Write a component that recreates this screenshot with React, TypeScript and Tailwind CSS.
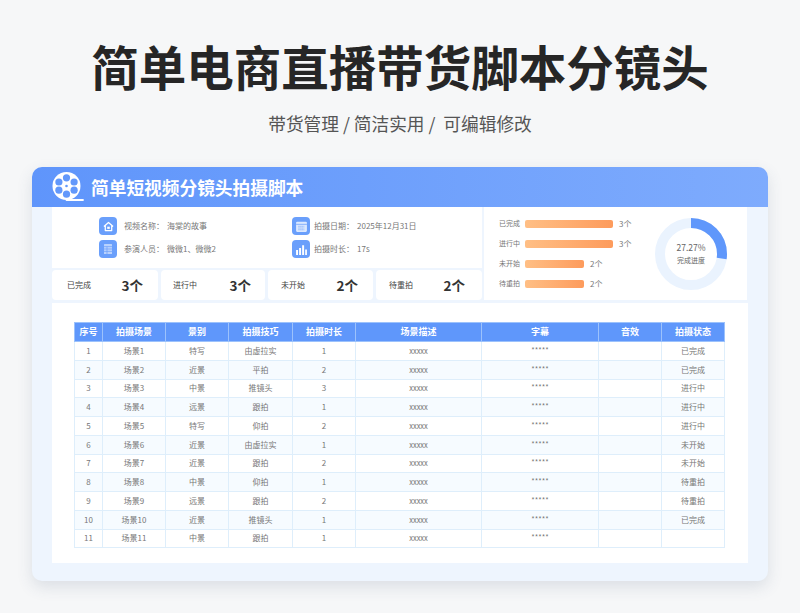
const font = { fontFamily: '"Noto Sans CJK SC", "Noto Sans", sans-serif' };

function HomeIcon() {
  return (
    <svg viewBox="0 0 12 12" className="h-[11px] w-[11px]">
      <path d="M1 6 6 1.6 11 6M2.5 5v5.4h7V5" fill="none" stroke="#fff" strokeWidth="1.4" strokeLinejoin="round" />
      <rect x="4.6" y="6.2" width="2.8" height="2.4" fill="#fff" />
    </svg>
  );
}

function SheetIcon() {
  return (
    <svg viewBox="0 0 12 12" className="h-[12px] w-[12px]">
      <rect x="2" y="1" width="8" height="10" rx="0.6" fill="#b9d2fd" />
      <path d="M2 3.6h8M2 6h8M2 8.4h8M5 3.6V11" stroke="#6a9ffb" strokeWidth="0.7" />
    </svg>
  );
}

function CalendarIcon() {
  return (
    <svg viewBox="0 0 12 12" className="h-[13px] w-[13px]">
      <rect x="1" y="1.6" width="10" height="9.4" rx="1" fill="#dbe8fe" />
      <path d="M1 4h10" stroke="#6a9ffb" strokeWidth="0.7" />
      <path d="M3.2 5.8h5.6M3.2 7.4h5.6M3.2 9h5.6" stroke="#6a9ffb" strokeWidth="0.8" strokeDasharray="1 0.8" />
    </svg>
  );
}

function BarsIcon() {
  return (
    <svg viewBox="0 0 12 12" className="h-[13px] w-[13px]">
      <path d="M1 6.5h1.8V11H1zM3.8 4.5h1.8V11H3.8zM6.6 2h1.8v9H6.6zM9.4 6h1.6v5H9.4z" fill="#fff" />
    </svg>
  );
}

const infoLeft = [
  { label: "视频名称：", value: "海棠的故事", icon: <HomeIcon /> },
  { label: "参演人员：", value: "微微1、微微2", icon: <SheetIcon /> },
];
const infoRight = [
  { label: "拍摄日期：", value: "2025年12月31日", icon: <CalendarIcon /> },
  { label: "拍摄时长：", value: "17s", icon: <BarsIcon /> },
];

const stats = [
  { label: "已完成", value: "3个", cls: "w-[106px] pl-[15px] pr-[15px]" },
  { label: "进行中", value: "3个", cls: "w-[104px] pl-[12px] pr-[14px]" },
  { label: "未开始", value: "2个", cls: "w-[105px] pl-[13px] pr-[15px]" },
  { label: "待重拍", value: "2个", cls: "w-[106px] pl-[13px] pr-[17px]" },
];

const bars = [
  { label: "已完成", value: "3个", w: "w-[88px]" },
  { label: "进行中", value: "3个", w: "w-[88px]" },
  { label: "未开始", value: "2个", w: "w-[59px]" },
  { label: "待重拍", value: "2个", w: "w-[59px]" },
];

const headers = ["序号", "拍摄场景", "景别", "拍摄技巧", "拍摄时长", "场景描述", "字幕", "音效", "拍摄状态"];
const widths = ["w-[28px]", "w-[63px]", "w-[63px]", "w-[64px]", "w-[63px]", "w-[126px]", "w-[117px]", "w-[63px]", "w-[63px]"];

const rows = [
  ["1", "场景1", "特写", "由虚拉实", "1", "已完成"],
  ["2", "场景2", "近景", "平拍", "2", "已完成"],
  ["3", "场景3", "中景", "推镜头", "3", "进行中"],
  ["4", "场景4", "远景", "跟拍", "1", "进行中"],
  ["5", "场景5", "特写", "仰拍", "2", "进行中"],
  ["6", "场景6", "近景", "由虚拉实", "1", "未开始"],
  ["7", "场景7", "近景", "跟拍", "2", "未开始"],
  ["8", "场景8", "中景", "仰拍", "1", "待重拍"],
  ["9", "场景9", "远景", "跟拍", "2", "待重拍"],
  ["10", "场景10", "近景", "推镜头", "1", "已完成"],
  ["11", "场景11", "中景", "跟拍", "1", ""],
];

function FilmLogo() {
  return (
    <svg viewBox="0 0 32 32" className="h-[32px] w-[32px]">
      <circle cx="14.5" cy="15" r="14" fill="#fff" />
      <path d="M14.5 29 H31" stroke="#fff" strokeWidth="1.8" strokeLinecap="round" />
      <circle cx="14.5" cy="6.8" r="3.6" fill="#6298fb" />
      <circle cx="14.5" cy="23.2" r="3.6" fill="#6298fb" />
      <circle cx="6.9" cy="11" r="3.6" fill="#6298fb" />
      <circle cx="22.1" cy="11" r="3.6" fill="#6298fb" />
      <circle cx="6.9" cy="19.2" r="3.6" fill="#6298fb" />
      <circle cx="22.1" cy="19.2" r="3.6" fill="#6298fb" />
      <circle cx="14.5" cy="15" r="1.3" fill="#6298fb" />
    </svg>
  );
}

function InfoRow({ label, value, icon, gap }: { label: string; value: string; icon: React.ReactNode; gap: string }) {
  return (
    <div className="flex items-center">
      <div className="grid h-[18px] w-[18px] place-items-center rounded-[4px] bg-[#6a9ffb]">{icon}</div>
      <span className={`w-[43px] whitespace-nowrap text-[8px] text-[#777] ${gap}`}>{label}</span>
      <span className="whitespace-nowrap text-[8px] text-[#777]">{value}</span>
    </div>
  );
}

function Donut() {
  return (
    <div className="relative h-[72px] w-[72px]">
      <svg viewBox="0 0 72 72" className="h-[72px] w-[72px]">
        <circle cx="36" cy="36" r="31" fill="none" stroke="#eaf3fe" strokeWidth="10" />
        <circle
          cx="36"
          cy="36"
          r="31"
          fill="none"
          stroke="#5f97fb"
          strokeWidth="10"
          strokeDasharray="53.1 194.8"
          transform="rotate(-90 36 36)"
        />
      </svg>
      <div className="absolute inset-0 flex flex-col items-center justify-center text-[#666]">
        <span className="text-[8.5px] leading-[13px]">27.27%</span>
        <span className="text-[7px] leading-[13px]">完成进度</span>
      </div>
    </div>
  );
}

export default function App() {
  return (
    <div style={font} className="h-[613px] w-[800px] overflow-hidden bg-[#f6f7f8]">
      <h1 className="pt-[35px] text-center text-[47.5px] font-bold leading-[62px] text-[#262626]">
        简单电商直播带货脚本分镜头
      </h1>
      <p className="mt-[12px] whitespace-pre text-center text-[17.7px] leading-[28px] text-[#555]">
        带货管理 / 简洁实用 /  可编辑修改
      </p>

      <div className="mx-[32px] mt-[30px] h-[414px] overflow-hidden rounded-[10px] bg-[#eef5fe] shadow-[0_6px_16px_rgba(60,80,110,0.14)]">
        <div className="flex h-[40px] items-center bg-gradient-to-r from-[#5f95fb] to-[#7eabfd] pl-[20px]">
          <FilmLogo />
          <span className="ml-[7px] text-[17.7px] font-bold text-white">简单短视频分镜头拍摄脚本</span>
        </div>

        <div className="mx-[20px]">
          <div className="flex gap-[2px]">
            <div className="w-[430px]">
              <div className="flex h-[61px] gap-[49px] bg-white pl-[47px] pt-[10px]">
                <div className="flex w-[144px] flex-col gap-[5px]">
                  {infoLeft.map((i) => (
                    <InfoRow key={i.label} {...i} gap="ml-[7px]" />
                  ))}
                </div>
                <div className="flex flex-col gap-[5px]">
                  {infoRight.map((i) => (
                    <InfoRow key={i.label} {...i} gap="ml-[4px]" />
                  ))}
                </div>
              </div>
              <div className="mt-[2px] flex gap-[3px]">
                {stats.map((s) => (
                  <div
                    key={s.label}
                    className={`flex h-[30px] items-center justify-between rounded-[4px] bg-white ${s.cls}`}
                  >
                    <span className="text-[8px] text-[#444]">{s.label}</span>
                    <span className="text-[13.5px] font-bold text-[#333]">{s.value}</span>
                  </div>
                ))}
              </div>
            </div>

            <div className="flex h-[93px] w-[263px] items-center bg-white pl-[15px]">
              <div className="flex w-[156px] flex-col gap-[6px]">
                {bars.map((b) => (
                  <div key={b.label} className="flex h-[14px] items-center">
                    <span className="w-[26px] text-[7px] text-[#777]">{b.label}</span>
                    <div className={`h-[8px] rounded-[2px] bg-gradient-to-r from-[#ffbf85] to-[#fd9b5c] ${b.w}`} />
                    <span className="ml-[6px] text-[8px] text-[#777]">{b.value}</span>
                  </div>
                ))}
              </div>
              <Donut />
            </div>
          </div>

          <div className="mt-[3px] h-[260px] bg-white px-[22px] pt-[19px]">
            <table className="w-[650px] table-fixed border-collapse">
              <thead>
                <tr className="h-[19px] bg-[#5f97fb]">
                  {headers.map((h, i) => (
                    <th
                      key={h}
                      className={`border border-[#9cc2fc] p-0 text-center text-[9px] font-bold leading-[10px] text-white ${widths[i]}`}
                    >
                      {h}
                    </th>
                  ))}
                </tr>
              </thead>
              <tbody>
                {rows.map((r, idx) => (
                  <tr key={r[0]} className={`h-[18.75px] ${idx % 2 === 0 ? "bg-white" : "bg-[#f6fbff]"}`}>
                    {r.slice(0, 5).map((c, i) => (
                      <td key={i} className="border border-[#deeefb] p-0 text-center text-[8px] leading-[10px] text-[#777]">
                        {c}
                      </td>
                    ))}
                    <td className="border border-[#deeefb] p-0 text-center text-[7.5px] leading-[10px] text-[#777]">xxxxx</td>
                    <td className="border border-[#deeefb] p-0 pb-[2px] text-center text-[7.5px] leading-[10px] text-[#777]">*****</td>
                    <td className="border border-[#deeefb] p-0" />
                    <td className="border border-[#deeefb] p-0 text-center text-[8px] leading-[10px] text-[#777]">{r[5]}</td>
                  </tr>
                ))}
              </tbody>
            </table>
          </div>
        </div>
      </div>
    </div>
  );
}
